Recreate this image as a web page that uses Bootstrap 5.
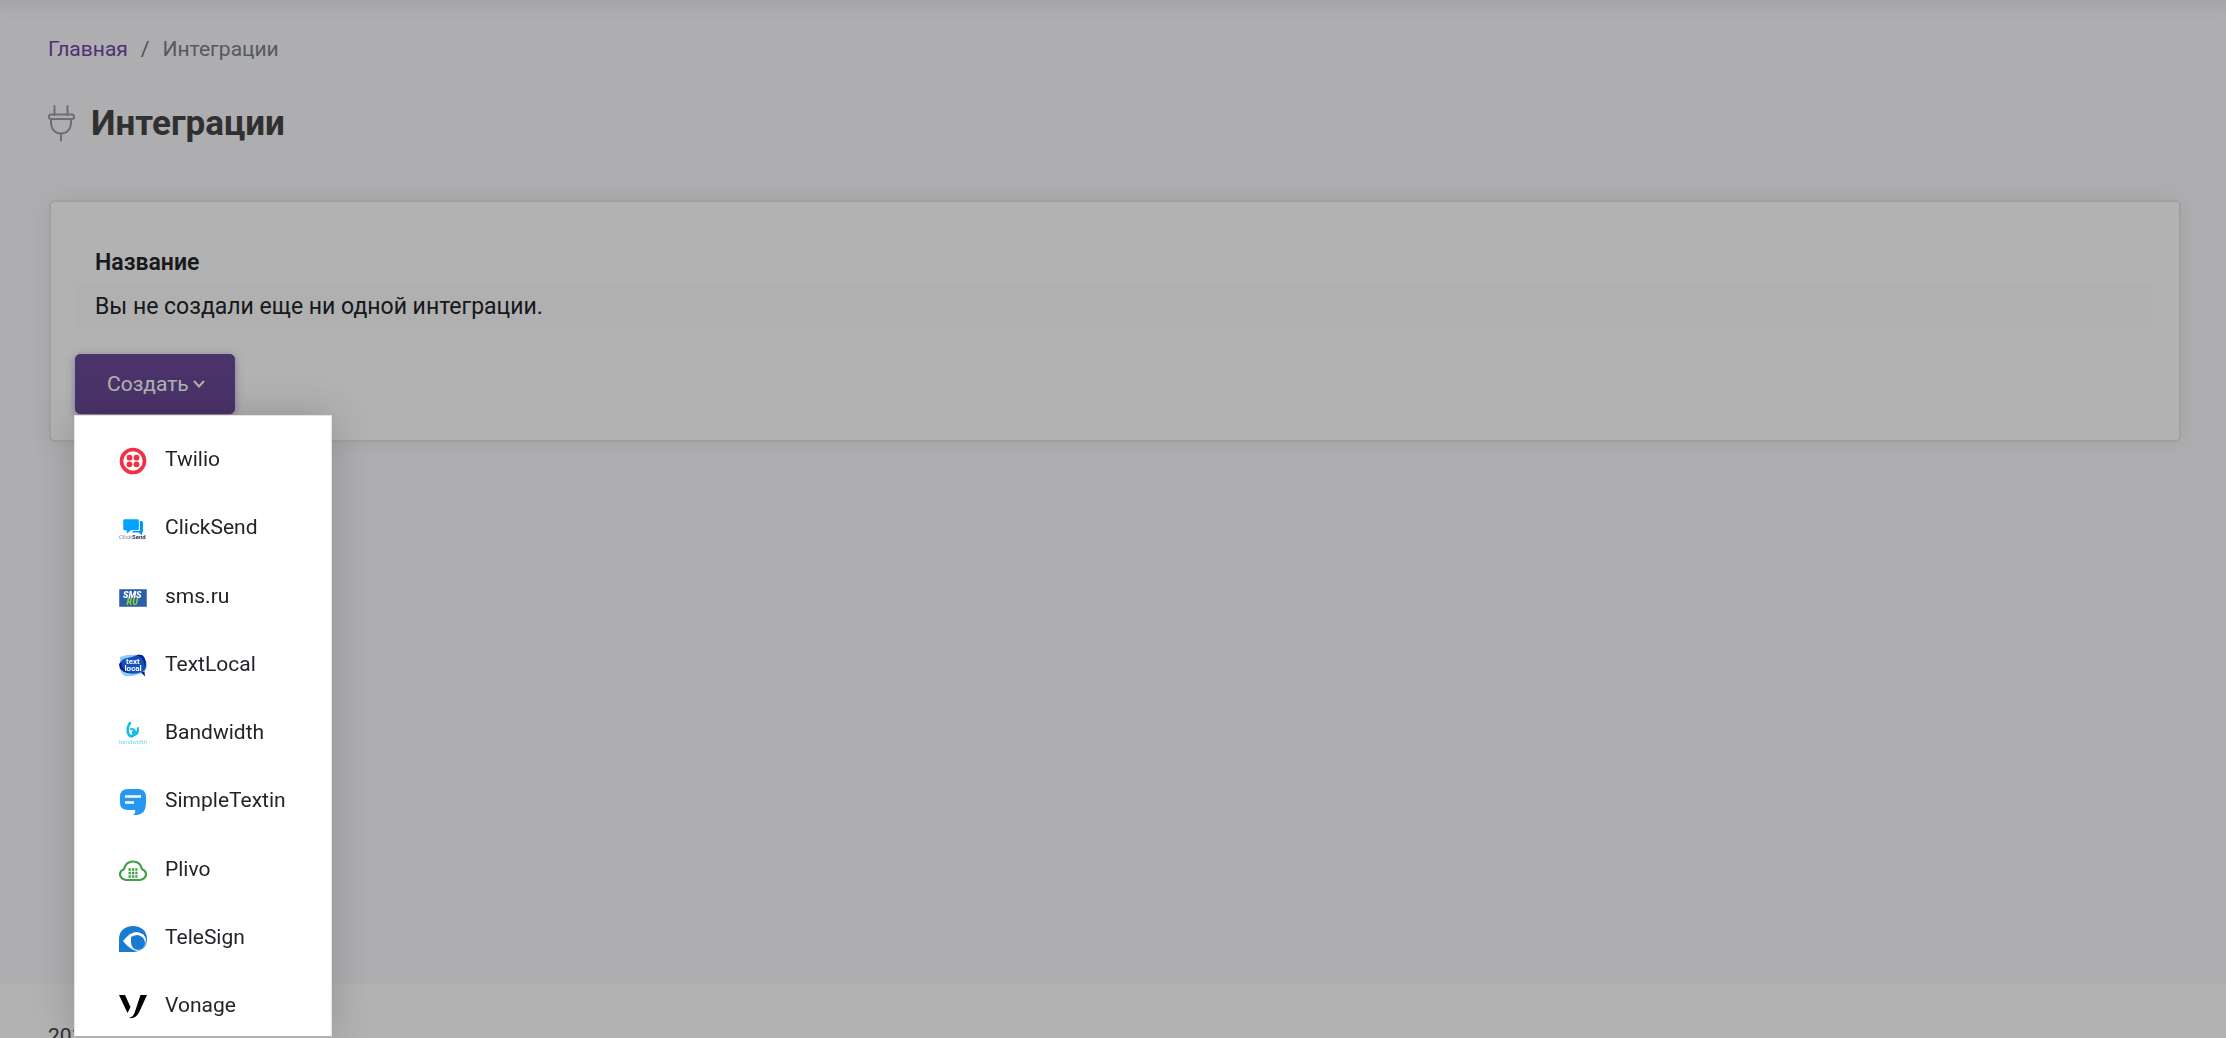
<!DOCTYPE html>
<html lang="ru">
<head>
<meta charset="utf-8">
<meta name="viewport" content="width=device-width, initial-scale=1">
<title>Интеграции</title>
<link href="https://cdn.jsdelivr.net/npm/bootstrap@5.3.0/dist/css/bootstrap.min.css" rel="stylesheet">
<style>
  body { font-family: Roboto, "Noto Sans", sans-serif; font-size: 21px; line-height: 28px; color: #212529; background: #f9f8fb; }
  .page-shell { height: 100vh; }
  .topbar-shadow { height: 20px; box-shadow: inset 0 20px 20px -18px rgba(110, 65, 95, .12); }
  .page-main { padding: 0 45px 0 48px; min-height: calc(100vh - 74px); }
  .crumbs { font-size: 21px; line-height: 28px; padding-top: 15px; margin-bottom: 40px; --bs-breadcrumb-item-padding-x: 13px; --bs-breadcrumb-divider-color: #6c757d; --bs-breadcrumb-item-active-color: #79828a; }
  .crumbs a { color: #7446a8; text-decoration: none; }
  .page-title { gap: 15px; font-size: 35px; line-height: 42px; font-weight: 700; color: #454545; margin-bottom: 55px; }
  .plug-icon { width: 28px; height: 37px; margin-top: 2px; color: #a0a0a2; }
  .panel { margin-left: 1px; border: 2px solid #e6e5e7; border-radius: 6px; padding: 39px 27px 26px 24px; box-shadow: 0 0 24px rgba(120, 50, 95, .09); }
  .list-table { font-size: 23px; line-height: 28px; margin-bottom: 25px; --bs-table-striped-bg: #fcfcfc; }
  .list-table > :not(caption) > * > * { padding: 8px 20px; border: 0; color: #212529; }
  .list-table th { font-weight: 600; }
  .create-btn { font-size: 21px; line-height: 28px; padding: 15px 29px 15px 31px; border-radius: 5px; --bs-btn-color: #fff; --bs-btn-bg: #6a4997; --bs-btn-border-color: #6a4997; --bs-btn-hover-color: #fff; --bs-btn-hover-bg: #5d3f87; --bs-btn-hover-border-color: #5d3f87; box-shadow: 0 2px 8px rgba(90, 60, 150, .45); }
  .site-footer { background: #fff; padding: 38px 48px; font-size: 21px; color: #454545; }
  .dimmer { position: fixed; inset: 0; background: rgba(0, 0, 0, .3); pointer-events: none; }
  .provider-menu { position: absolute; top: 415px; bottom: 0; left: 74px; width: 258px; padding: 19px 0 7px; background: #fff; border: 1px solid #e4e3e6; border-bottom: 2px solid #b0b0b0; box-shadow: 0 0 36px rgba(20, 0, 20, .18); }
  .provider-menu a { display: flex; align-items: center; gap: 18px; padding: 10px 22px 10px 44px; color: #212529; text-decoration: none; font-size: 21px; line-height: 28px; }
  .provider-menu svg { width: 28px; height: 28px; flex: none; margin-top: 2px; margin-bottom: -2px; }
</style>
</head>
<body>
<div class="page-shell overflow-hidden position-relative">
  <div class="topbar-shadow"></div>
  <main class="page-main">
    <nav aria-label="Навигация">
      <ol class="breadcrumb crumbs">
        <li class="breadcrumb-item"><a href="#">Главная</a></li>
        <li class="breadcrumb-item active" aria-current="page">Интеграции</li>
      </ol>
    </nav>
    <h1 class="page-title d-flex align-items-start">
      <svg class="plug-icon" viewBox="0 0 28 37" fill="none" stroke="currentColor" stroke-width="2" stroke-linecap="round" aria-hidden="true"><path d="M6.500 1v9M19.500 1v9M3 15v2.500c0 7 4.500 11 10 11s10-4 10-11V15M13 28.500v7"/><rect x="1" y="9.500" width="25" height="4.500" rx="2"/></svg>
      <span>Интеграции</span>
    </h1>
    <section class="card panel">
      <table class="table table-striped list-table">
        <thead><tr><th scope="col">Название</th></tr></thead>
        <tbody><tr><td>Вы не создали еще ни одной интеграции.</td></tr></tbody>
      </table>
      <div>
        <button type="button" class="btn create-btn" aria-expanded="true">Создать<svg class="ms-1" width="12" height="12" viewBox="0 0 12 12" fill="none" stroke="currentColor" stroke-width="2" aria-hidden="true"><path d="M1 2l5 5.500L11 2"/></svg></button>
      </div>
    </section>
  </main>
  <footer class="site-footer">2018</footer>
  <div class="dimmer"></div>
  <nav class="provider-menu d-flex flex-column justify-content-between" aria-label="Создать">
    <a href="#"><svg viewBox="0 0 28 28"><circle cx="14" cy="14" r="11.500" fill="none" stroke="#f22f46" stroke-width="3.600"/><g fill="#f22f46"><circle cx="10.500" cy="10.700" r="2.900"/><circle cx="17.500" cy="10.700" r="2.900"/><circle cx="10.500" cy="17.300" r="2.900"/><circle cx="17.500" cy="17.300" r="2.900"/></g></svg>Twilio</a>
    <a href="#"><svg viewBox="0 0 28 28"><path fill="#0099f7" d="M21 6h1.500q1.500 0 1.500 1.500v9q0 1-1 1v3l-3.500-3H13l1-1.500h5.500q1.500 0 1.500-1.500z"/><path fill="#00a4ff" stroke="#fff" stroke-width=".5" d="M5.500 4h13q1.700 0 1.700 1.700v8.100q0 1.700-1.700 1.700H12l-4.500 3.500v-3.500h-2q-1.500 0-1.500-1.700V5.700Q4 4 5.500 4z"/><text x="0" y="24" font-family="Roboto" font-size="6" fill="#857f99">Click<tspan font-weight="700" fill="#332a62">Send</tspan></text></svg>ClickSend</a>
    <a href="#"><svg viewBox="0 0 28 28"><path fill="#2c5fa8" stroke="#5d83b8" d="M.5 5.500h27v17H.5z"/><g font-family="Roboto" font-weight="900" font-style="italic"><text x="4" y="13.500" font-size="9" fill="#fff">SMS</text><text x="7.500" y="21" font-size="9" fill="#8fd12d">RU</text></g></svg>sms.ru</a>
    <a href="#"><svg viewBox="0 0 28 28"><path fill="#8ecdf5" d="M1 5Q8 2 18 3q9 2 10 9 0 8-7 10-9 3-15 2-4-2-5-7z"/><path fill="#1450b8" d="M1 12q1-5 7-6 6-1 10-3 5-1 7 2 3 6 1 13l-3 2q-8 3-15 1-7-2-7-9z"/><path fill="#08169a" d="M0 12l2-2q0 7 8 11-10-1-10-9zM18 3q5-1 7 2 3 6 1 12 0-7-3-11zM22 20.500l3.500-1 .5 5z"/><g fill="#fff" font-family="Roboto" font-weight="700" font-size="8"><text x="7" y="12">text</text><text x="5.500" y="18.500">local</text></g></svg>TextLocal</a>
    <a href="#"><svg viewBox="0 0 28 28"><g fill="none" stroke="#13bce9" stroke-linecap="round"><path stroke-width="2.600" d="M11 3C8 7 8 13 10 15c3 3 6 0 4-3"/><path stroke-width="2" d="M12 9q4 0 4 3 3 1 3-4M14 15q5 0 5-5"/></g><text x="0" y="24" font-family="Roboto" font-size="6" fill="#78d9f4">bandwidth</text></svg>Bandwidth</a>
    <a href="#"><svg viewBox="0 0 28 28"><path fill="#2698f1" d="M9 1h10q8 0 8 8v6q0 11-9 12h-4q3-2 2-5H9q-8 0-8-7V9q0-8 8-8z"/><path stroke="#fff" stroke-width="2.600" d="M6 8.500h16M6 14.500h9"/></svg>SimpleTextin</a>
    <a href="#"><svg viewBox="0 0 28 28"><path fill="none" stroke="#43a047" stroke-width="2.200" d="M7 23q-6-1-6-6c0-3 2-4 4-5 1-4 4-7.500 9-7.500s8 3.500 9 7.500c2 1 4 2 4 5q0 5-6 6z"/><path stroke="#43a047" stroke-width="2.400" stroke-dasharray="2.400 1" d="M9.500 12.500h9M9.500 16h9M9.500 19.500h9"/></svg>Plivo</a>
    <a href="#"><svg viewBox="0 0 28 28"><path fill="#187bd1" d="M0 27V14C0 6 6 1 14 1s14 5 14 13-6 13-14 13z"/><path fill="#fff" d="M4 16q7-9 14-9 8 1 9 8-1 10-9 11-8-2-14-10z"/><path fill="#187bd1" d="M12 12q3-2 7-2 7 2 7 8-1 7-7 7-7-1-7-8z"/></svg>TeleSign</a>
    <a href="#"><svg viewBox="0 0 28 28"><path d="M0 2h6l5.500 12-3 6zM21.500 2H28l-8 17.500Q16.500 26 10 25q4-1 5.500-5z"/></svg>Vonage</a>
  </nav>
</div>
<script src="https://cdn.jsdelivr.net/npm/bootstrap@5.3.0/dist/js/bootstrap.bundle.min.js"></script>
</body>
</html>
